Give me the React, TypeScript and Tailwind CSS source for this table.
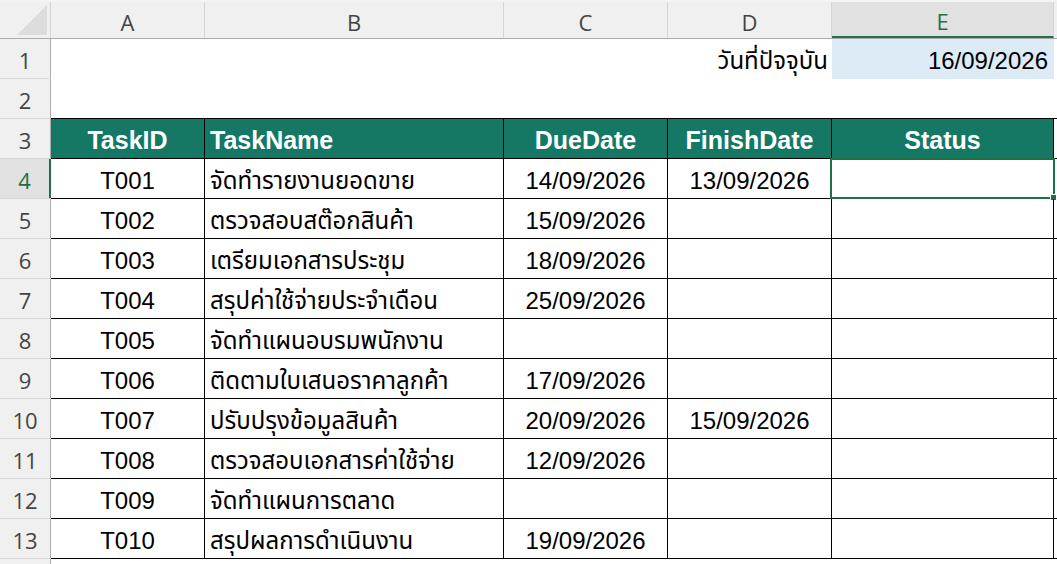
import type { ReactNode } from 'react'

const tasks = [
  ['T001', 'จัดทำรายงานยอดขาย', '14/09/2026', '13/09/2026'],
  ['T002', 'ตรวจสอบสต๊อกสินค้า', '15/09/2026', ''],
  ['T003', 'เตรียมเอกสารประชุม', '18/09/2026', ''],
  ['T004', 'สรุปค่าใช้จ่ายประจำเดือน', '25/09/2026', ''],
  ['T005', 'จัดทำแผนอบรมพนักงาน', '', ''],
  ['T006', 'ติดตามใบเสนอราคาลูกค้า', '17/09/2026', ''],
  ['T007', 'ปรับปรุงข้อมูลสินค้า', '20/09/2026', '15/09/2026'],
  ['T008', 'ตรวจสอบเอกสารค่าใช้จ่าย', '12/09/2026', ''],
  ['T009', 'จัดทำแผนการตลาด', '', ''],
  ['T010', 'สรุปผลการดำเนินงาน', '19/09/2026', ''],
]

const cellFont = "font-['Liberation_Sans','Noto_Sans_Thai','Tahoma',sans-serif]"
const uiFont = "font-['Open_Sans','Noto_Sans',sans-serif]"

function RowHead({ n, active }: { n: number; active?: boolean }) {
  return (
    <div
      className={
        active
          ? `flex w-[51px] shrink-0 items-center justify-center border-r-2 border-[#1e7145] bg-[#e1e1e1] pt-1 text-[22px] text-[#1e7145] ${uiFont}`
          : `flex w-[51px] shrink-0 items-center justify-center border-r border-[#ababab] bg-[#f0f0f0] pt-1 text-[22px] text-[#444] ${uiFont}`
      }
    >
      {n}
    </div>
  )
}

function Row({ n, active, line, children }: { n: number; active?: boolean; line?: boolean; children: ReactNode }) {
  return (
    <div className="flex h-[40px]">
      <div className="flex border-b border-[#d4d4d4]">
        <RowHead n={n} active={active} />
      </div>
      <div className={line ? 'flex flex-1 border-b border-black' : 'flex flex-1'}>{children}</div>
    </div>
  )
}

const widths = ['w-[154px]', 'w-[299px]', 'w-[164px]', 'w-[164px]', 'w-[222px]']

export default function App() {
  return (
    <div className={`h-[564px] w-[1057px] overflow-hidden bg-white ${cellFont}`}>
      <div className="h-[2px] bg-[#f3f3f3]" />
      {/* column headers */}
      <div className={`flex h-[37px] border-b border-[#ababab] bg-[#f0f0f0] text-[22px] text-[#444] ${uiFont}`}>
        <div className="relative w-[51px] shrink-0 border-r border-[#d4d4d4]">
          <div className="absolute bottom-[3px] right-[3px] h-0 w-0 border-b-[30px] border-l-[30px] border-b-[#dcdcdc] border-l-transparent" />
        </div>
        {['A', 'B', 'C', 'D'].map((c, i) => (
          <div key={c} className={`flex ${widths[i]} shrink-0 items-center justify-center border-r border-[#d4d4d4] pt-1`}>
            {c}
          </div>
        ))}
        <div className="flex w-[222px] shrink-0 items-center justify-center border-b-2 border-r border-b-[#1e7145] border-r-[#d4d4d4] bg-[#e1e1e1] pt-1 text-[#1e7145]">
          E
        </div>
        <div className="flex-1" />
      </div>

      <Row n={1}>
        <div className="w-[154px] shrink-0" />
        <div className="w-[299px] shrink-0" />
        <div className="w-[164px] shrink-0" />
        <div className="flex w-[164px] shrink-0 items-center justify-end pr-[4px] pt-1 text-[24px]">วันที่ปัจจุบัน</div>
        <div className="flex w-[222px] shrink-0 items-center justify-end bg-[#ddebf7] pr-[6px] pt-1 text-[24px]">16/09/2026</div>
      </Row>
      <Row n={2} line>
        <div />
      </Row>
      <Row n={3} line>
        {['TaskID', 'TaskName', 'DueDate', 'FinishDate', 'Status'].map((h, i) => (
          <div
            key={h}
            className={`flex ${widths[i]} shrink-0 items-center ${i === 1 ? 'justify-start pl-[5px]' : 'justify-center'} border-r border-black bg-[#147864] pt-1 text-[25px] font-bold text-white`}
          >
            {h}
          </div>
        ))}
      </Row>
      {tasks.map((t, r) => (
        <Row key={t[0]} n={r + 4} active={r === 0} line>
          {[t[0], t[1], t[2], t[3], ''].map((v, i) => (
            <div
              key={i}
              className={`relative flex ${widths[i]} shrink-0 items-center ${i === 1 ? 'justify-start pl-[5px]' : 'justify-center'} border-r border-black pt-1 text-[24px] text-black`}
            >
              {v}
              {r === 0 && i === 4 && (
                <div className="pointer-events-none absolute -bottom-[1px] -left-[2px] -right-[2px] -top-[1px] border-2 border-[#1e7145]">
                  <div className="absolute -bottom-[4px] -right-[4px] h-[7px] w-[7px] border border-white bg-[#1e7145]" />
                </div>
              )}
            </div>
          ))}
        </Row>
      ))}
      <div className="flex h-[20px]">
        <div className="w-[51px] shrink-0 border-r border-[#ababab] bg-[#f0f0f0]" />
      </div>
    </div>
  )
}
